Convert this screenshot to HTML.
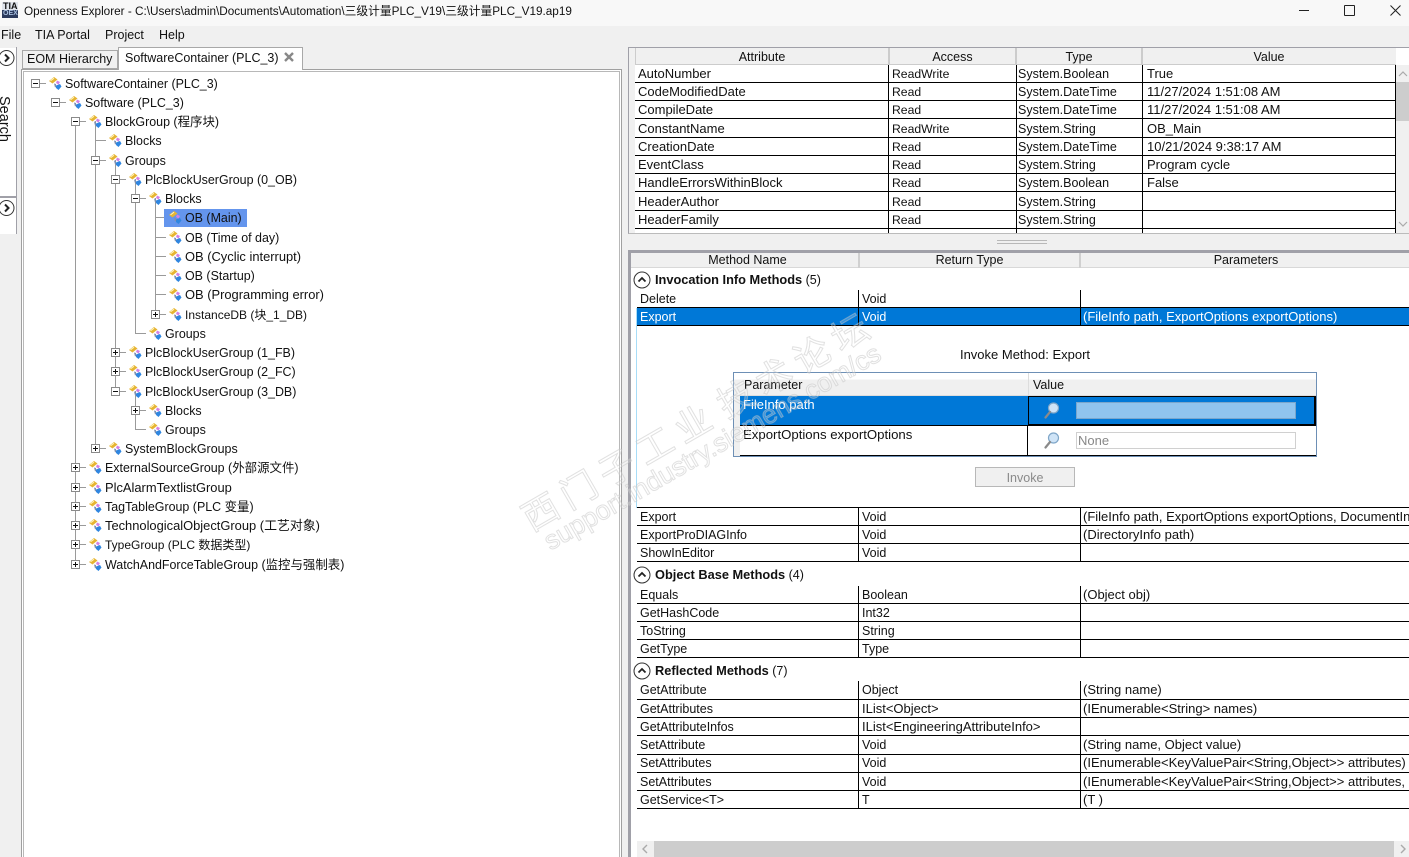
<!DOCTYPE html>
<html><head><meta charset="utf-8"><style>
html,body{margin:0;padding:0;background:#f0f0f0;overflow:hidden;width:1409px;height:857px}
body{font-family:"Liberation Sans","Noto Sans CJK SC",sans-serif;font-size:12.5px;color:#111}
#r{position:absolute;left:0;top:0;width:1409px;height:857px;overflow:hidden}
div,svg{position:absolute}
.t{position:absolute;white-space:nowrap;line-height:16px;height:16px}
.c{text-align:center}
.l{background:#000;height:1px}
.v{background:#000;width:1px}
.w{color:#fff}
.b{font-weight:bold;font-size:12.8px}
.p{font-size:13px}
.s{font-size:12.2px}
#tt .t{font-size:12.45px}
#tt .x{font-size:12.9px}
#tt .y{font-size:12px}
.wm{color:rgba(255,255,255,.22);-webkit-text-stroke:1px rgba(195,195,195,.5);transform:rotate(-30deg);transform-origin:left center}
</style></head><body><div id="r">
<svg width="0" height="0"><defs>
<symbol id="ic" viewBox="0 0 13 13"><path d="M0 4L5 0L8.500 2.500L3.500 6.500z" fill="#e6b432"/><path d="M1.500 3.800L5 1.200" stroke="#fff4b8" fill="none"/><path d="M8 3.500L11 5L9.500 7.500L7 6z" fill="#d480e4"/><path d="M5 6.500L7 7V10L6 10.500z" fill="#8090b0"/><path d="M7 8.500L11 7L12.500 9.500L9.500 13L7 11z" fill="#2f86e0"/></symbol>
<symbol id="mg" viewBox="0 0 16 18"><circle cx="9.500" cy="6" r="5" fill="#cfe4f7" stroke="#7fa6c8" stroke-width="1.200"/><path d="M6 10L1.500 15.500" stroke="#8a8a8a" stroke-width="2.200" stroke-linecap="round"/></symbol>
</defs></svg>

<!-- Title bar -->
<div style="left:0;top:0;width:1409px;height:26px;background:#f8f8f8"></div>
<div style="left:2px;top:2px;width:16px;height:8px;background:#dfe3ea"></div>
<div style="left:2px;top:10px;width:16px;height:8px;background:#2c3a5c"></div>
<div class="t" style="left:3px;top:1px;font-size:9px;font-weight:bold;color:#111;line-height:10px;height:10px">TIA</div>
<div class="t" style="left:3px;top:10px;font-size:7px;font-weight:bold;color:#a9c0e0;line-height:8px;height:8px">OEX</div>
<div class="t" style="left:24px;top:4px;font-size:11.75px">Openness Explorer - C:\Users\admin\Documents\Automation\三级计量PLC_V19\三级计量PLC_V19.ap19</div>
<div class="l" style="left:1299px;top:10px;width:10px;background:#222"></div>
<div style="left:1344px;top:5px;width:9px;height:9px;border:1px solid #222;border-radius:1px"></div>
<svg style="left:1390px;top:5px" width="11" height="11"><path d="M.5.500L10.500 10.500M10.500.500L.5 10.500" stroke="#222" fill="none"/></svg>

<!-- Menu -->
<div class="t" style="left:1px;top:27px">File</div>
<div class="t" style="left:35px;top:27px">TIA Portal</div>
<div class="t" style="left:105px;top:27px">Project</div>
<div class="t" style="left:159px;top:27px">Help</div>

<!-- Left search strip -->
<div style="left:0;top:48px;width:16px;height:148px;background:#fff"></div>
<div style="left:16px;top:47px;width:1px;height:149px;background:#a0a0a8"></div>
<div style="left:0;top:196px;width:17px;height:38px;background:#fff;border-top:2px solid #a0a0a8;box-sizing:border-box;border-right:1px solid #a0a0a8"></div>
<svg style="left:0;top:48px" width="16" height="20"><circle cx="6.500" cy="10" r="7.500" fill="#fff" stroke="#333"/><path d="M5 6.500L8.500 10L5 13.500" stroke="#222" stroke-width="2" fill="none"/></svg>
<svg style="left:0;top:198px" width="16" height="20"><circle cx="6.500" cy="10" r="7.500" fill="#fff" stroke="#333"/><path d="M5 6.500L8.500 10L5 13.500" stroke="#222" stroke-width="2" fill="none"/></svg>
<div class="t" style="left:-19px;top:111px;font-size:14.5px;transform:rotate(90deg);width:46px;text-align:center">Search</div>

<!-- Left pane -->
<div style="left:21px;top:69px;width:601px;height:800px;background:#fff;border:1px solid #a0a0a0;box-sizing:border-box"></div>
<div style="left:23px;top:71px;width:597px;height:800px;background:#fff;border:1px solid #b8b8b8;box-sizing:border-box"></div>
<div style="left:22px;top:50px;width:96px;height:19px;background:#f0f0f0;border:1px solid #a8a8a8;box-sizing:border-box"></div>
<div class="t" style="left:27px;top:51px">EOM Hierarchy</div>
<div style="left:118px;top:47px;width:185px;height:23px;background:#fff;border:1px solid #a8a8a8;border-bottom:0;box-sizing:border-box"></div>
<div class="t" style="left:125px;top:50px">SoftwareContainer (PLC_3)</div>
<svg style="left:284px;top:52px" width="10" height="10"><path d="M1 1L9 9M9 1L1 9" stroke="#888" stroke-width="2.400" fill="none"/></svg>

<!-- Tree lines -->
<svg style="left:0;top:0" width="400" height="600">
<g stroke="#9a9a9a" fill="none" shape-rendering="crispEdges">
<path d="M75.500 121V564M95.500 121V448M115.500 160V391M135.500 179V333M135.500 391V429M155.500 198V314"/>
<path d="M35 83.500h11M55 102.500h11M75 121.500h11M75 467.500h11M75 487.500h11M75 506.500h11M75 525.500h11M75 544.500h11M75 564.500h11M95 140.500h11M95 160.500h11M95 448.500h11M115 179.500h11M115 352.500h11M115 371.500h11M115 391.500h11M135 198.500h11M135 333.500h11M135 410.500h11M135 429.500h11M155 217.500h9M155 237.500h11M155 256.500h11M155 275.500h11M155 294.500h11M155 314.500h11"/>
</g>
<g fill="#fff" stroke="#8a8a8a" shape-rendering="crispEdges">
<rect x="31.500" y="79.500" width="8" height="8"/><rect x="51.500" y="98.500" width="8" height="8"/><rect x="71.500" y="117.500" width="8" height="8"/><rect x="91.500" y="156.500" width="8" height="8"/><rect x="111.500" y="175.500" width="8" height="8"/><rect x="131.500" y="194.500" width="8" height="8"/><rect x="111.500" y="387.500" width="8" height="8"/>
<rect x="151.500" y="310.500" width="8" height="8"/><rect x="111.500" y="348.500" width="8" height="8"/><rect x="111.500" y="367.500" width="8" height="8"/><rect x="131.500" y="406.500" width="8" height="8"/><rect x="91.500" y="444.500" width="8" height="8"/><rect x="71.500" y="463.500" width="8" height="8"/><rect x="71.500" y="483.500" width="8" height="8"/><rect x="71.500" y="502.500" width="8" height="8"/><rect x="71.500" y="521.500" width="8" height="8"/><rect x="71.500" y="540.500" width="8" height="8"/><rect x="71.500" y="560.500" width="8" height="8"/>
</g>
<g stroke="#111" shape-rendering="crispEdges" fill="none">
<path d="M33 83.500h5M53 102.500h5M73 121.500h5M93 160.500h5M113 179.500h5M133 198.500h5M113 391.500h5M153 314.500h5M113 352.500h5M113 371.500h5M133 410.500h5M93 448.500h5M73 467.500h5M73 487.500h5M73 506.500h5M73 525.500h5M73 544.500h5M73 564.500h5"/>
<path d="M155.500 312v5M115.500 350v5M115.500 369v5M135.500 408v5M95.500 446v5M75.500 465v5M75.500 485v5M75.500 504v5M75.500 523v5M75.500 542v5M75.500 562v5"/>
</g>
</svg>
<div style="left:164px;top:209px;width:83px;height:18px;background:#6495ed"></div>

<!-- Tree icons -->
<svg style="left:0;top:0" width="400" height="600">
<use href="#ic" x="49" y="77" width="13" height="13"/><use href="#ic" x="69" y="96" width="13" height="13"/><use href="#ic" x="89" y="115" width="13" height="13"/><use href="#ic" x="109" y="134" width="13" height="13"/><use href="#ic" x="109" y="154" width="13" height="13"/><use href="#ic" x="129" y="173" width="13" height="13"/><use href="#ic" x="149" y="192" width="13" height="13"/><use href="#ic" x="169" y="211" width="13" height="13"/><use href="#ic" x="169" y="231" width="13" height="13"/><use href="#ic" x="169" y="250" width="13" height="13"/><use href="#ic" x="169" y="269" width="13" height="13"/><use href="#ic" x="169" y="288" width="13" height="13"/><use href="#ic" x="169" y="308" width="13" height="13"/><use href="#ic" x="149" y="327" width="13" height="13"/><use href="#ic" x="129" y="346" width="13" height="13"/><use href="#ic" x="129" y="365" width="13" height="13"/><use href="#ic" x="129" y="385" width="13" height="13"/><use href="#ic" x="149" y="404" width="13" height="13"/><use href="#ic" x="149" y="423" width="13" height="13"/><use href="#ic" x="109" y="442" width="13" height="13"/><use href="#ic" x="89" y="461" width="13" height="13"/><use href="#ic" x="89" y="481" width="13" height="13"/><use href="#ic" x="89" y="500" width="13" height="13"/><use href="#ic" x="89" y="519" width="13" height="13"/><use href="#ic" x="89" y="538" width="13" height="13"/><use href="#ic" x="89" y="558" width="13" height="13"/>
</svg>

<!-- Tree text -->
<div id="tt" style="left:0;top:1px;width:620px;height:600px">
<div class="t" style="left:65px;top:75px">SoftwareContainer (PLC_3)</div>
<div class="t" style="left:85px;top:94px">Software (PLC_3)</div>
<div class="t" style="left:105px;top:113px">BlockGroup (程序块)</div>
<div class="t" style="left:125px;top:132px">Blocks</div>
<div class="t" style="left:125px;top:152px">Groups</div>
<div class="t" style="left:145px;top:171px">PlcBlockUserGroup (0_OB)</div>
<div class="t" style="left:165px;top:190px">Blocks</div>
<div class="t" style="left:185px;top:209px">OB (Main)</div>
<div class="t" style="left:185px;top:229px">OB (Time of day)</div>
<div class="t x" style="left:185px;top:248px">OB (Cyclic interrupt)</div>
<div class="t" style="left:185px;top:267px">OB (Startup)</div>
<div class="t x" style="left:185px;top:286px">OB (Programming error)</div>
<div class="t y" style="left:185px;top:306px">InstanceDB (块_1_DB)</div>
<div class="t" style="left:165px;top:325px">Groups</div>
<div class="t" style="left:145px;top:344px">PlcBlockUserGroup (1_FB)</div>
<div class="t" style="left:145px;top:363px">PlcBlockUserGroup (2_FC)</div>
<div class="t" style="left:145px;top:383px">PlcBlockUserGroup (3_DB)</div>
<div class="t" style="left:165px;top:402px">Blocks</div>
<div class="t" style="left:165px;top:421px">Groups</div>
<div class="t" style="left:125px;top:440px">SystemBlockGroups</div>
<div class="t" style="left:105px;top:459px">ExternalSourceGroup (外部源文件)</div>
<div class="t x" style="left:105px;top:479px">PlcAlarmTextlistGroup</div>
<div class="t" style="left:105px;top:498px">TagTableGroup (PLC 变量)</div>
<div class="t x" style="left:105px;top:517px">TechnologicalObjectGroup (工艺对象)</div>
<div class="t y" style="left:105px;top:536px">TypeGroup (PLC 数据类型)</div>
<div class="t" style="left:105px;top:556px">WatchAndForceTableGroup (监控与强制表)</div>
</div>

<!-- Top attribute table -->
<div style="left:628px;top:47px;width:781px;height:187px;background:#f0f0f0;border-top:1px solid #a0a0a8;border-left:1px solid #a0a0a8;border-bottom:1px solid #bbb;box-sizing:border-box"></div>
<div style="left:635px;top:65px;width:761px;height:168px;background:#fff"></div>
<div style="left:1396px;top:48px;width:13px;height:17px;background:#fff"></div>
<div style="left:635px;top:48px;width:761px;height:17px;background:#f0f0f0;border-bottom:1px solid #ccc;box-sizing:border-box"></div>
<div style="left:635px;top:48px;width:1px;height:17px;background:#ccc"></div>
<div style="left:888px;top:48px;width:2px;height:17px;background:#ccc"></div>
<div style="left:1015px;top:48px;width:2px;height:17px;background:#ccc"></div>
<div style="left:1141px;top:48px;width:2px;height:17px;background:#ccc"></div>
<div class="t c" style="left:636px;top:49px;width:252px">Attribute</div>
<div class="t c" style="left:889px;top:49px;width:127px">Access</div>
<div class="t c" style="left:1016px;top:49px;width:126px">Type</div>
<div class="t c" style="left:1142px;top:49px;width:254px">Value</div>
<div class="l" style="left:635px;top:82px;width:761px"></div>
<div class="l" style="left:635px;top:100px;width:761px"></div>
<div class="l" style="left:635px;top:118px;width:761px"></div>
<div class="l" style="left:635px;top:137px;width:761px"></div>
<div class="l" style="left:635px;top:155px;width:761px"></div>
<div class="l" style="left:635px;top:173px;width:761px"></div>
<div class="l" style="left:635px;top:191px;width:761px"></div>
<div class="l" style="left:635px;top:210px;width:761px"></div>
<div class="l" style="left:635px;top:228px;width:761px"></div>
<div class="v" style="left:888px;top:65px;height:168px"></div>
<div class="v" style="left:1016px;top:65px;height:168px"></div>
<div class="v" style="left:1142px;top:65px;height:168px"></div>
<div class="v" style="left:1395px;top:65px;height:168px"></div>
<div style="left:1396px;top:82px;width:13px;height:39px;background:#cdcdcd"></div>
<svg style="left:1398px;top:70px" width="10" height="160"><path d="M1 6L5 2L9 6M1 152L5 156L9 152" stroke="#aaa" fill="none" stroke-width="1.200"/></svg>

<div class="t p" style="left:638px;top:66px">AutoNumber</div><div class="t s" style="left:892px;top:66px">ReadWrite</div><div class="t" style="left:1018px;top:66px">System.Boolean</div><div class="t p" style="left:1147px;top:66px">True</div>
<div class="t p" style="left:638px;top:84px">CodeModifiedDate</div><div class="t s" style="left:892px;top:84px">Read</div><div class="t" style="left:1018px;top:84px">System.DateTime</div><div class="t p" style="left:1147px;top:84px">11/27/2024 1:51:08 AM</div>
<div class="t p" style="left:638px;top:102px">CompileDate</div><div class="t s" style="left:892px;top:102px">Read</div><div class="t" style="left:1018px;top:102px">System.DateTime</div><div class="t p" style="left:1147px;top:102px">11/27/2024 1:51:08 AM</div>
<div class="t p" style="left:638px;top:121px">ConstantName</div><div class="t s" style="left:892px;top:121px">ReadWrite</div><div class="t" style="left:1018px;top:121px">System.String</div><div class="t p" style="left:1147px;top:121px">OB_Main</div>
<div class="t p" style="left:638px;top:139px">CreationDate</div><div class="t s" style="left:892px;top:139px">Read</div><div class="t" style="left:1018px;top:139px">System.DateTime</div><div class="t p" style="left:1147px;top:139px">10/21/2024 9:38:17 AM</div>
<div class="t p" style="left:638px;top:157px">EventClass</div><div class="t s" style="left:892px;top:157px">Read</div><div class="t" style="left:1018px;top:157px">System.String</div><div class="t p" style="left:1147px;top:157px">Program cycle</div>
<div class="t p" style="left:638px;top:175px">HandleErrorsWithinBlock</div><div class="t s" style="left:892px;top:175px">Read</div><div class="t" style="left:1018px;top:175px">System.Boolean</div><div class="t p" style="left:1147px;top:175px">False</div>
<div class="t p" style="left:638px;top:194px">HeaderAuthor</div><div class="t s" style="left:892px;top:194px">Read</div><div class="t" style="left:1018px;top:194px">System.String</div>
<div class="t p" style="left:638px;top:212px">HeaderFamily</div><div class="t s" style="left:892px;top:212px">Read</div><div class="t" style="left:1018px;top:212px">System.String</div>

<!-- Splitter grip -->
<div style="left:997px;top:240px;width:50px;height:1px;background:#b8b8b8"></div>
<div style="left:997px;top:243px;width:50px;height:1px;background:#b8b8b8"></div>

<!-- Methods panel -->
<div style="left:628px;top:250px;width:781px;height:607px;background:#fff;border-top:3px solid #a0a0a8;border-left:3px solid #a0a0a8;box-sizing:border-box"></div>
<div style="left:631px;top:253px;width:778px;height:15px;background:#f0f0f0;border-bottom:1px solid #d8d8d8;box-sizing:border-box"></div>
<div style="left:858px;top:253px;width:2px;height:15px;background:#d0d0d0"></div>
<div style="left:1079px;top:253px;width:2px;height:15px;background:#d0d0d0"></div>
<div class="t c" style="left:637px;top:252px;width:221px">Method Name</div>
<div class="t c" style="left:860px;top:252px;width:219px">Return Type</div>
<div class="t c" style="left:1081px;top:252px;width:330px">Parameters</div>

<!-- Blue selected row -->
<div style="left:637px;top:308px;width:772px;height:17px;background:#0078d7"></div>
<div style="left:636px;top:308px;width:1px;height:200px;background:#a8ddf8"></div>

<!-- Method table lines -->
<div class="l" style="left:637px;top:307px;width:772px"></div>
<div class="l" style="left:637px;top:325px;width:772px"></div>
<div class="l" style="left:637px;top:507px;width:772px"></div>
<div class="l" style="left:637px;top:525px;width:772px"></div>
<div class="l" style="left:637px;top:543px;width:772px"></div>
<div class="l" style="left:637px;top:561px;width:772px"></div>
<div class="l" style="left:637px;top:603px;width:772px"></div>
<div class="l" style="left:637px;top:621px;width:772px"></div>
<div class="l" style="left:637px;top:639px;width:772px"></div>
<div class="l" style="left:637px;top:657px;width:772px"></div>
<div class="l" style="left:637px;top:699px;width:772px"></div>
<div class="l" style="left:637px;top:717px;width:772px"></div>
<div class="l" style="left:637px;top:735px;width:772px"></div>
<div class="l" style="left:637px;top:754px;width:772px"></div>
<div class="l" style="left:637px;top:772px;width:772px"></div>
<div class="l" style="left:637px;top:790px;width:772px"></div>
<div class="l" style="left:637px;top:808px;width:772px"></div>
<div class="v" style="left:858px;top:290px;height:35px"></div>
<div class="v" style="left:1080px;top:290px;height:35px"></div>
<div class="v" style="left:858px;top:507px;height:54px"></div>
<div class="v" style="left:1080px;top:507px;height:54px"></div>
<div class="v" style="left:858px;top:586px;height:71px"></div>
<div class="v" style="left:1080px;top:586px;height:71px"></div>
<div class="v" style="left:858px;top:681px;height:127px"></div>
<div class="v" style="left:1080px;top:681px;height:127px"></div>

<!-- Groups -->
<svg style="left:633px;top:271px" width="18" height="18"><circle cx="9" cy="9" r="8" fill="#fff" stroke="#333"/><path d="M5.500 10.500L9 7L12.500 10.500" stroke="#222" stroke-width="1.800" fill="none"/></svg>
<svg style="left:633px;top:566px" width="18" height="18"><circle cx="9" cy="9" r="8" fill="#fff" stroke="#333"/><path d="M5.500 10.500L9 7L12.500 10.500" stroke="#222" stroke-width="1.800" fill="none"/></svg>
<svg style="left:633px;top:662px" width="18" height="18"><circle cx="9" cy="9" r="8" fill="#fff" stroke="#333"/><path d="M5.500 10.500L9 7L12.500 10.500" stroke="#222" stroke-width="1.800" fill="none"/></svg>
<div class="t" style="left:655px;top:272px"><span class="b">Invocation Info Methods</span> (5)</div>
<div class="t" style="left:655px;top:567px"><span class="b">Object Base Methods</span> (4)</div>
<div class="t" style="left:655px;top:663px"><span class="b">Reflected Methods</span> (7)</div>

<!-- Method rows -->
<div class="t" style="left:640px;top:291px">Delete</div><div class="t" style="left:862px;top:291px">Void</div>
<div class="t w" style="left:640px;top:309px">Export</div><div class="t w" style="left:862px;top:309px">Void</div><div class="t w p" style="left:1083px;top:309px">(FileInfo path, ExportOptions exportOptions)</div>
<div class="t" style="left:640px;top:509px">Export</div><div class="t" style="left:862px;top:509px">Void</div><div class="t p" style="left:1083px;top:509px">(FileInfo path, ExportOptions exportOptions, DocumentInfo</div>
<div class="t" style="left:640px;top:527px">ExportProDIAGInfo</div><div class="t" style="left:862px;top:527px">Void</div><div class="t p" style="left:1083px;top:527px">(DirectoryInfo path)</div>
<div class="t" style="left:640px;top:545px">ShowInEditor</div><div class="t" style="left:862px;top:545px">Void</div>
<div class="t" style="left:640px;top:587px">Equals</div><div class="t" style="left:862px;top:587px">Boolean</div><div class="t p" style="left:1083px;top:587px">(Object obj)</div>
<div class="t" style="left:640px;top:605px">GetHashCode</div><div class="t" style="left:862px;top:605px">Int32</div>
<div class="t" style="left:640px;top:623px">ToString</div><div class="t" style="left:862px;top:623px">String</div>
<div class="t" style="left:640px;top:641px">GetType</div><div class="t" style="left:862px;top:641px">Type</div>
<div class="t" style="left:640px;top:682px">GetAttribute</div><div class="t" style="left:862px;top:682px">Object</div><div class="t p" style="left:1083px;top:682px">(String name)</div>
<div class="t" style="left:640px;top:701px">GetAttributes</div><div class="t p" style="left:862px;top:701px">IList&lt;Object&gt;</div><div class="t p" style="left:1083px;top:701px">(IEnumerable&lt;String&gt; names)</div>
<div class="t" style="left:640px;top:719px">GetAttributeInfos</div><div class="t p" style="left:862px;top:719px">IList&lt;EngineeringAttributeInfo&gt;</div>
<div class="t" style="left:640px;top:737px">SetAttribute</div><div class="t" style="left:862px;top:737px">Void</div><div class="t p" style="left:1083px;top:737px">(String name, Object value)</div>
<div class="t" style="left:640px;top:755px">SetAttributes</div><div class="t" style="left:862px;top:755px">Void</div><div class="t p" style="left:1083px;top:755px">(IEnumerable&lt;KeyValuePair&lt;String,Object&gt;&gt; attributes)</div>
<div class="t" style="left:640px;top:774px">SetAttributes</div><div class="t" style="left:862px;top:774px">Void</div><div class="t p" style="left:1083px;top:774px">(IEnumerable&lt;KeyValuePair&lt;String,Object&gt;&gt; attributes, Boolean</div>
<div class="t" style="left:640px;top:792px">GetService&lt;T&gt;</div><div class="t" style="left:862px;top:792px">T</div><div class="t p" style="left:1083px;top:792px">(T )</div>

<!-- Invoke panel -->
<div class="t c p" style="left:850px;top:347px;width:350px">Invoke Method: Export</div>
<div style="left:733px;top:372px;width:584px;height:85px;background:#fff;border:1px solid #6d8fb5;box-sizing:border-box"></div>
<div style="left:734px;top:373px;width:582px;height:23px;background:linear-gradient(#fff 30%,#f0f0f0 30%);border-bottom:1px solid #ddd;box-sizing:border-box"></div>
<div style="left:1028px;top:373px;width:1px;height:23px;background:#ddd"></div>
<div style="left:734px;top:396px;width:6px;height:60px;background:#f0f0f0"></div>
<div class="t" style="left:744px;top:377px">Parameter</div>
<div class="t" style="left:1033px;top:377px">Value</div>
<div style="left:740px;top:396px;width:288px;height:29px;background:#0078d7"></div>
<div style="left:1028px;top:396px;width:288px;height:30px;background:#0078d7;border:1px solid #000;border-width:1px 2px 2px 1px;box-sizing:border-box"></div>
<div style="left:1076px;top:402px;width:220px;height:17px;background:#90c4ee;border:1px solid #7aa6cc;box-sizing:border-box"></div>
<div class="l" style="left:740px;top:425px;width:576px"></div>
<div class="l" style="left:740px;top:455px;width:576px"></div>
<div class="v" style="left:1027px;top:425px;height:31px"></div>
<div class="t w p" style="left:743px;top:397px">FileInfo path</div>
<div class="t p" style="left:743px;top:427px;font-size:13.2px">ExportOptions exportOptions</div>
<svg style="left:1044px;top:402px" width="16" height="18"><use href="#mg" width="16" height="18"/></svg>
<svg style="left:1044px;top:432px" width="16" height="18"><use href="#mg" width="16" height="18"/></svg>
<div style="left:1076px;top:432px;width:220px;height:17px;background:#fff;border:1px solid #d0d0d0;box-sizing:border-box"></div>
<div class="t p" style="left:1078px;top:433px;color:#888">None</div>
<div style="left:975px;top:467px;width:100px;height:20px;background:#f0f0f0;border:1px solid #b8b8b8;box-sizing:border-box"></div>
<div class="t c" style="left:975px;top:470px;width:100px;color:#8a8a8a">Invoke</div>

<!-- Horizontal scrollbar -->
<div style="left:637px;top:841px;width:772px;height:16px;background:#f0f0f0"></div>
<div style="left:654px;top:841px;width:740px;height:16px;background:#cdcdcd"></div>
<svg style="left:640px;top:843px" width="10" height="12"><path d="M7 2L3 6L7 10" stroke="#aaa" stroke-width="1.400" fill="none"/></svg>
<svg style="left:1398px;top:843px" width="10" height="12"><path d="M3 2L7 6L3 10" stroke="#aaa" stroke-width="1.400" fill="none"/></svg>

<!-- Watermark -->
<div class="t wm" style="left:524px;top:494px;height:50px;line-height:50px;font-size:36px;letter-spacing:8px;font-family:'Noto Sans CJK SC',sans-serif">西门子工业</div>
<div class="t wm" style="left:719px;top:381px;height:50px;line-height:50px;font-size:36px;letter-spacing:8px;font-family:'Noto Sans CJK SC',sans-serif">技术论坛</div>
<div class="t wm" style="left:546px;top:528px;height:30px;line-height:30px;font-size:26.5px">support.industry.siemens.com/cs</div>
</div></body></html>
